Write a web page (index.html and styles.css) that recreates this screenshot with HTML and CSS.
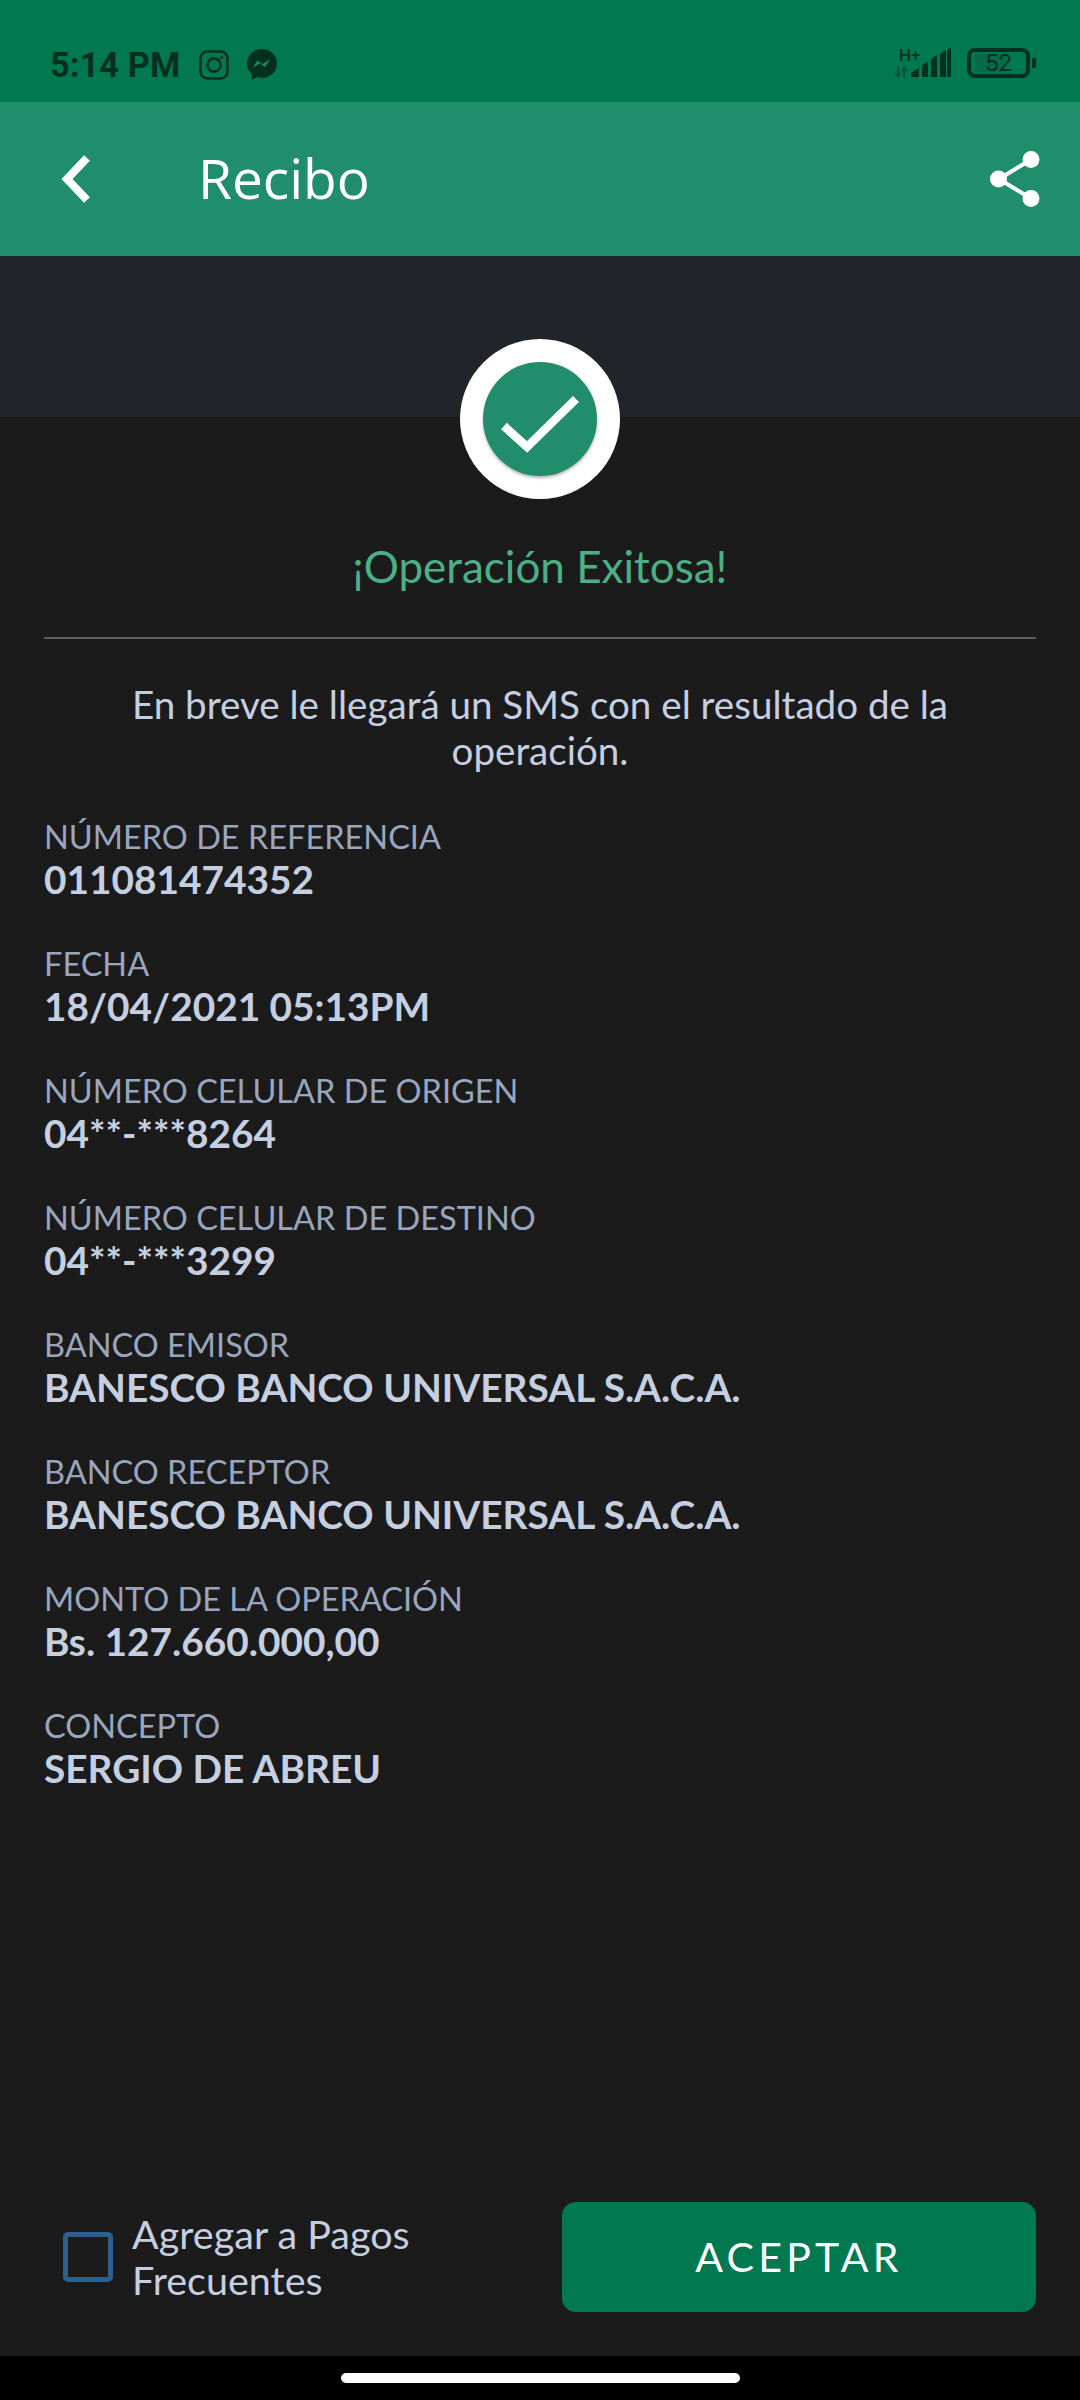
FILE: index.html
```html
<!DOCTYPE html>
<html lang="es">
<head>
<meta charset="utf-8">
<title>Recibo</title>
<link rel="stylesheet" href="styles.css">
</head>
<body>
<div class="screen">
  <header class="status">
    <div class="status-left">
      <span class="time">5:14 PM</span>
      <svg class="ig" viewBox="0 0 30 30" width="30" height="30"><rect x="1.5" y="1.5" width="27" height="27" rx="7" fill="none" stroke="#04301f" stroke-width="2.6"/><circle cx="15" cy="15" r="6.6" fill="none" stroke="#04301f" stroke-width="2.6"/><circle cx="22.6" cy="7.4" r="1.7" fill="#04301f"/></svg>
      <svg class="ms" viewBox="0 0 30 32" width="30" height="32"><path d="M15 0C6.7 0 0 6.2 0 14.500c0 4.300 1.800 8 4.700 10.600V31l5.400-3c1.600.5 3.200.8 4.900.8 8.300 0 15-6.100 15-14.300S23.300 0 15 0z" fill="#04301f"/><path d="M5.500 19l5-7.600 5 3.600 7.500-4.600-5 7.600-5-3.700z" fill="#1b8a63"/></svg>
    </div>
    <div class="status-right">
      <div class="net">
        <span class="hplus">H+</span>
        <svg class="arrows" viewBox="0 0 14 12" width="14" height="12"><path d="M4 0v9M1 7l3 4 2-4M10 12V3M8 5l2-4 3 4" fill="none" stroke="#04301f" stroke-opacity=".55" stroke-width="1.600"/></svg>
      </div>
      <svg class="signal" viewBox="0 0 42 30" width="42" height="30"><path d="M0 29V25L8 20V29ZM11 29V18Q11 17 12 16.500L16 14Q17 14 17 15V29ZM20 29V12Q20 11 21 10.500L26 7V29ZM29 29V6L35 2V29ZM36 29V1.500L40 0V29Z" fill="#04301f"/></svg>
      <div class="battery">
        <div class="batt-body"><span class="batt-fill"></span><span class="batt-num">52</span></div>
        <span class="batt-cap"></span>
      </div>
    </div>
  </header>

  <nav class="toolbar">
    <svg class="back" viewBox="0 0 30 50" width="30" height="50"><path d="M26 4L6 25l20 21" fill="none" stroke="#fff" stroke-width="8"/></svg>
    <h1 class="title">Recibo</h1>
    <svg class="share" viewBox="0 0 50 56" width="50" height="56"><path d="M41 8.500L9 28l32 19.500" fill="none" stroke="#fff" stroke-width="4"/><circle cx="41" cy="8.500" r="8.500" fill="#fff"/><circle cx="8.500" cy="28" r="8.500" fill="#fff"/><circle cx="41" cy="47.500" r="8.500" fill="#fff"/></svg>
  </nav>

  <div class="band">
    <div class="badge">
      <div class="badge-inner">
        <svg viewBox="0 0 114 114" width="114" height="114"><path d="M21 64l23 21 49-48" fill="none" stroke="#fff" stroke-width="8.500"/></svg>
      </div>
    </div>
  </div>

  <main class="content">
    <h2 class="success">¡Operación Exitosa!</h2>
    <hr class="rule">
    <p class="note">En breve le llegará un SMS con el resultado de la operación.</p>
    <dl class="fields">
      <div class="field"><dt>NÚMERO DE REFERENCIA</dt><dd>011081474352</dd></div>
      <div class="field"><dt>FECHA</dt><dd>18/04/2021 05:13PM</dd></div>
      <div class="field"><dt>NÚMERO CELULAR DE ORIGEN</dt><dd>04**-***8264</dd></div>
      <div class="field"><dt>NÚMERO CELULAR DE DESTINO</dt><dd>04**-***3299</dd></div>
      <div class="field"><dt>BANCO EMISOR</dt><dd>BANESCO BANCO UNIVERSAL S.A.C.A.</dd></div>
      <div class="field"><dt>BANCO RECEPTOR</dt><dd>BANESCO BANCO UNIVERSAL S.A.C.A.</dd></div>
      <div class="field"><dt>MONTO DE LA OPERACIÓN</dt><dd>Bs. 127.660.000,00</dd></div>
      <div class="field"><dt>CONCEPTO</dt><dd>SERGIO DE ABREU</dd></div>
    </dl>
    <footer class="actions">
      <label class="check"><span class="box"></span><span class="check-text">Agregar a Pagos Frecuentes</span></label>
      <button class="accept">ACEPTAR</button>
    </footer>
  </main>

  <div class="navbar"><span class="home"></span></div>
</div>
</body>
</html>
```
FILE: styles.css
```css
* { box-sizing: border-box; }
html, body { margin: 0; padding: 0; }
body { width: 1080px; height: 2400px; background: #000; font-family: "Lato", sans-serif; overflow: hidden; }
.screen { width: 1080px; height: 2400px; display: flex; flex-direction: column; }

.status { height: 102px; flex: none; background: #007850; display: flex; justify-content: space-between; align-items: flex-start; padding: 49px 0 0 50px; }
.status-left { display: flex; align-items: center; }
.time { font-family: "Roboto", sans-serif; font-weight: 700; font-size: 34.5px; line-height: 32px; color: #04301f; width: 149px; white-space: nowrap; }
.ms { margin-left: 18px; }
.status-right { display: flex; align-items: flex-start; padding-right: 44px; margin-top: -1px; }
.net { width: 26px; display: flex; flex-direction: column; align-items: flex-start; }
.hplus { font-family: "Roboto", sans-serif; font-weight: 500; font-size: 17px; line-height: 14px; color: #04301f; margin-left: 5px; white-space: nowrap; }
.arrows { margin: 4px 0 0 0; }
.signal { margin-left: -9px; }
.battery { display: flex; align-items: center; margin-left: 14px; }
.batt-body { position: relative; width: 63px; height: 30px; border: 4px solid #04301f; border-radius: 8px; display: flex; align-items: center; justify-content: center; }
.batt-fill { position: absolute; left: 4px; top: 2px; bottom: 2px; width: 30px; background: #056a48; border-radius: 2px; }
.batt-num { position: relative; font-family: "Roboto", sans-serif; font-size: 24px; line-height: 22px; color: #04301f; }
.batt-cap { width: 4px; height: 10px; margin-left: 2px; background: #04301f; border-radius: 0 2px 2px 0; }

.toolbar { height: 154px; flex: none; background: #208d6b; display: flex; align-items: center; padding: 0 0 0 61px; }
.back { flex: none; }
.title { margin: -3px 0 0 107px; flex: 1; font-family: "Open Sans", sans-serif; font-weight: 400; font-size: 55px; line-height: 60px; color: #fff; }
.share { flex: none; margin-right: 40px; }

.band { height: 161px; flex: none; background: #212529; position: relative; }
.badge { position: absolute; left: 460px; top: 83px; width: 160px; height: 160px; border-radius: 50%; background: #fff; display: flex; align-items: center; justify-content: center; z-index: 1; }
.badge-inner { width: 114px; height: 114px; border-radius: 50%; background: #218d6b; box-shadow: 0 2px 3px rgba(0,0,0,.3); }
.badge-inner svg { display: block; }

.content { flex: 1; background: #1b1b1b; padding: 124px 44px 44px; display: flex; flex-direction: column; }
.success { margin: 0; text-align: center; font-weight: 400; font-size: 44px; line-height: 50px; color: #4caf85; }
.rule { margin: 46px 0 0; height: 2px; border: 0; background: #5c6066; }
.note { margin: 42px 0 0; text-align: center; font-size: 38.600px; line-height: 46px; color: #c5cfe0; }
.fields { margin: 44px 0 0; flex: 1; }
.field { height: 127px; }
.field dt { font-size: 32.5px; line-height: 40px; color: #9aa6bd; white-space: nowrap; }
.field dd { margin: 0; font-weight: 700; font-size: 38.800px; line-height: 44px; color: #c5cfe0; white-space: nowrap; }

.actions { display: flex; align-items: center; justify-content: space-between; height: 110px; }
.check { display: flex; align-items: center; padding-left: 19px; }
.box { width: 50px; height: 50px; border: 5px solid #2d5f8f; border-radius: 5px; flex: none; }
.check-text { width: 320px; margin-left: 19px; font-size: 39.500px; line-height: 46px; color: #c5cfe0; }
.accept { width: 474px; height: 110px; border: 0; border-radius: 14px; background: #007850; color: #fff; font-family: "Lato", sans-serif; font-size: 41px; letter-spacing: 4.300px; padding: 0 0 2px; }

.navbar { height: 44px; flex: none; background: #000; display: flex; justify-content: center; padding-top: 17px; }
.home { width: 399px; height: 10px; border-radius: 5px; background: #fff; }
```
